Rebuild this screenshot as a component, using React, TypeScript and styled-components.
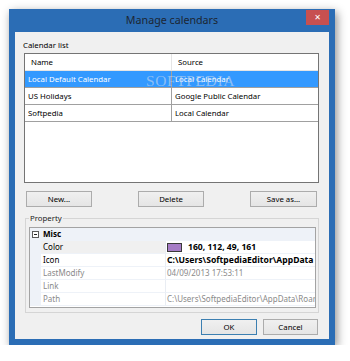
import styled, { createGlobalStyle } from "styled-components";

const GlobalStyle = createGlobalStyle`
  html, body {
    margin: 0;
    background: #ffffff;
  }
  body {
    font-family: "Noto Sans", "Open Sans", sans-serif;
    font-size: 7.8px;
    color: #000;
  }
`;

const Page = styled.div`
  padding: 9px 0 0 9px;
`;

const Window = styled.div`
  position: relative;
  width: 326px;
  display: flex;
  flex-direction: column;
  padding: 0 6px 6px;
  box-sizing: border-box;
  background: #2b6db5;
  box-shadow: 2px 3px 9px rgba(0, 0, 0, 0.45);
`;

const TitleBar = styled.div`
  height: 23px;
  display: grid;
  grid-template-columns: 23px 1fr 23px;
`;

const Title = styled.div`
  grid-column: 2;
  text-align: center;
  line-height: 23px;
  font-size: 10.7px;
  color: #1c2633;
`;

const CloseButton = styled.div`
  grid-column: 3;
  margin-top: 1px;
  height: 15px;
  background: #c75050;
  color: #fff;
  font-family: "DejaVu Sans", sans-serif;
  font-size: 8px;
  line-height: 15px;
  text-align: center;
`;

const Client = styled.div`
  height: 307px;
  box-sizing: border-box;
  background: #f0f0f0;
  padding: 7px 10px 4px 8px;
  display: flex;
  flex-direction: column;
`;

const SectionLabel = styled.div`
  height: 12px;
  line-height: 12px;
`;

const ListBox = styled.div`
  position: relative;
  margin: 2px 0 0 1px;
  height: 130px;
  box-sizing: border-box;
  border: 1px solid #747474;
  background: #fff;
  overflow: hidden;
`;

const ListRow = styled.div<{ $header?: boolean; $selected?: boolean }>`
  display: grid;
  grid-template-columns: 147px 1fr;
  height: 17px;
  box-sizing: border-box;
  border-bottom: 1px solid ${(p) => (p.$header ? "#e5e5e5" : "#a0a0a0")};
  background: ${(p) => (p.$selected ? "#3399ff" : "#fff")};
  color: ${(p) => (p.$selected ? "#fff" : "#000")};
`;

const ListCell = styled.div<{ $header?: boolean }>`
  padding-left: ${(p) => (p.$header ? 6 : 3)}px;
  line-height: 16px;
  white-space: nowrap;
  overflow: hidden;
  &:first-child {
    border-right: 1px solid ${(p) => (p.$header ? "#e5e5e5" : "#a0a0a0")};
  }
`;

const Watermark = styled.div`
  position: absolute;
  left: 121px;
  top: 18px;
  font-family: "Liberation Serif", serif;
  font-size: 15.5px;
  line-height: 18px;
  letter-spacing: 0.6px;
  color: rgba(215, 222, 235, 0.55);
  pointer-events: none;
  white-space: nowrap;
`;

const ButtonRow = styled.div`
  margin-top: 8px;
  padding: 0 2px 0 3px;
  display: flex;
  justify-content: space-between;
`;

const Button = styled.div<{ $width?: number; $default?: boolean }>`
  width: ${(p) => p.$width ?? 66}px;
  height: 16px;
  box-sizing: border-box;
  border: 1px solid ${(p) => (p.$default ? "#3c7fb1" : "#acacac")};
  background: linear-gradient(#f0f0f0, #e5e5e5);
  text-align: center;
  line-height: 14px;
`;

const PropertyGroup = styled.fieldset`
  margin: 5px 0 0 2px;
  width: 294px;
  box-sizing: border-box;
  border: 1px solid #d5d5d5;
  padding: 3px 2px 4px 3px;
  min-width: 0;
`;

const Legend = styled.legend`
  padding: 0 1px;
  line-height: 12px;
  color: #222;
`;

const PropGrid = styled.div`
  height: 81px;
  box-sizing: border-box;
  border: 1px solid #a3a3a3;
  background: #fff;
  overflow: hidden;
  font-size: 8px;
`;

const PropRow = styled.div<{ $category?: boolean }>`
  display: grid;
  grid-template-columns: 11px 125px 1fr;
  height: 13px;
  line-height: 12px;
  background: ${(p) => (p.$category ? "#eef2f8" : "#fff")};
`;

const Margin = styled.div`
  background: #eef2f8;
  display: flex;
  align-items: center;
  justify-content: center;
`;

const NameCell = styled.div<{ $muted?: boolean; $selected?: boolean; $wide?: boolean }>`
  grid-column: ${(p) => (p.$wide ? "2 / 4" : "auto")};
  padding-left: 2px;
  color: ${(p) => (p.$muted ? "#8a8a8a" : "#000")};
  background: ${(p) => (p.$selected ? "#f0f0f0" : "transparent")};
  border-right: ${(p) => (p.$wide ? "none" : "1px solid #e9edf3")};
  border-bottom: 1px solid #eef2f8;
  font-weight: ${(p) => (p.$wide ? 700 : 400)};
  white-space: nowrap;
`;

const ValueCell = styled.div<{ $muted?: boolean; $bold?: boolean }>`
  padding-left: 1px;
  display: flex;
  align-items: center;
  gap: 6px;
  color: ${(p) => (p.$muted ? "#8a8a8a" : "#000")};
  font-weight: ${(p) => (p.$bold ? 700 : 400)};
  font-size: ${(p) => (p.$bold ? 8.6 : 8)}px;
  border-bottom: 1px solid #eef2f8;
  white-space: nowrap;
  overflow: hidden;
`;

const Expander = styled.span`
  position: relative;
  width: 7px;
  height: 7px;
  box-sizing: border-box;
  border: 1px solid #5a5a5a;
  background: #fff;
  &::after {
    content: "";
    position: absolute;
    left: 1px;
    right: 1px;
    top: 2px;
    height: 1px;
    background: #222;
  }
`;

const Swatch = styled.span<{ $color: string }>`
  flex: none;
  width: 15px;
  height: 9px;
  box-sizing: border-box;
  border: 1px solid #3a3a3a;
  background: ${(p) => p.$color};
`;

const Footer = styled.div`
  margin-top: 6px;
  padding-right: 1px;
  display: flex;
  justify-content: flex-end;
  gap: 6px;
`;

const calendars = [
  { name: "Local Default Calendar", source: "Local Calendar", selected: true },
  { name: "US Holidays", source: "Google Public Calendar" },
  { name: "Softpedia", source: "Local Calendar" },
];

const App = () => {
  return (
    <Page>
      <GlobalStyle />
      <Window>
        <TitleBar>
          <Title>Manage calendars</Title>
          <CloseButton>✕</CloseButton>
        </TitleBar>
        <Client>
          <SectionLabel>Calendar list</SectionLabel>
          <ListBox>
            <ListRow $header>
              <ListCell $header>Name</ListCell>
              <ListCell $header>Source</ListCell>
            </ListRow>
            {calendars.map((c) => (
              <ListRow key={c.name} $selected={c.selected}>
                <ListCell>{c.name}</ListCell>
                <ListCell>{c.source}</ListCell>
              </ListRow>
            ))}
            <Watermark>SOFTPEDIA</Watermark>
          </ListBox>
          <ButtonRow>
            <Button>New...</Button>
            <Button>Delete</Button>
            <Button $width={67}>Save as...</Button>
          </ButtonRow>
          <PropertyGroup>
            <Legend>Property</Legend>
            <PropGrid>
              <PropRow $category>
                <Margin>
                  <Expander />
                </Margin>
                <NameCell $wide>Misc</NameCell>
              </PropRow>
              <PropRow>
                <Margin />
                <NameCell $selected>Color</NameCell>
                <ValueCell $bold>
                  <Swatch $color="#a67cc6" />
                  160, 112, 49, 161
                </ValueCell>
              </PropRow>
              <PropRow>
                <Margin />
                <NameCell>Icon</NameCell>
                <ValueCell $bold>C:\Users\SoftpediaEditor\AppData</ValueCell>
              </PropRow>
              <PropRow>
                <Margin />
                <NameCell $muted>LastModify</NameCell>
                <ValueCell $muted>04/09/2013 17:53:11</ValueCell>
              </PropRow>
              <PropRow>
                <Margin />
                <NameCell $muted>Link</NameCell>
                <ValueCell $muted />
              </PropRow>
              <PropRow>
                <Margin />
                <NameCell $muted>Path</NameCell>
                <ValueCell $muted>C:\Users\SoftpediaEditor\AppData\Roar</ValueCell>
              </PropRow>
            </PropGrid>
          </PropertyGroup>
          <Footer>
            <Button $width={56} $default>OK</Button>
            <Button $width={55}>Cancel</Button>
          </Footer>
        </Client>
      </Window>
    </Page>
  );
};

export default App;
